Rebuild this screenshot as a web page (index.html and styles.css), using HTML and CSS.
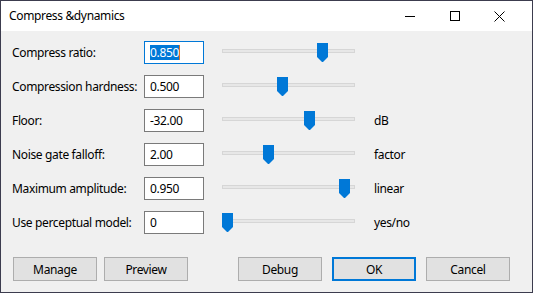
FILE: index.html
```html
<!DOCTYPE html>
<html lang="en">
<head>
<meta charset="UTF-8" />
<title>Compress &amp;dynamics</title>
<link rel="stylesheet" href="styles.css">
</head>
<body>

  <div class="window">

    <!-- Title bar -->
    <div class="titlebar">
      <span class="title">Compress &amp;dynamics</span>
      <div class="caption">
        <span class="cap-btn">
          <svg width="10" height="10" viewBox="0 0 10 10"><path d="M0 5.5H10" stroke="#000" stroke-width="1"/></svg>
        </span>
        <span class="cap-btn">
          <svg width="10" height="10" viewBox="0 0 10 10"><rect x="0.5" y="0.5" width="9" height="9" fill="none" stroke="#000" stroke-width="1"/></svg>
        </span>
        <span class="cap-btn">
          <svg width="11" height="11" viewBox="0 0 11 11"><path d="M0.5 0.5L10.5 10.5M10.5 0.5L0.5 10.5" stroke="#000" stroke-width="1"/></svg>
        </span>
      </div>
    </div>

    <!-- Body -->
    <div class="content">
      <div class="params">

        <div class="row">
          <span class="label">Compress ratio:</span>
          <div class="field focused"><span class="sel">0.850</span></div>
          <div class="slider"><div class="track"></div><svg class="thumb" style="left:95px" width="11" height="19" viewBox="0 0 11 19"><path d="M0 0H11V14L6 19H5L0 14Z" fill="#0078d7"/></svg></div>
          <span class="unit"></span>
        </div>

        <div class="row">
          <span class="label">Compression hardness:</span>
          <div class="field">0.500</div>
          <div class="slider"><div class="track"></div><svg class="thumb" style="left:55px" width="11" height="19" viewBox="0 0 11 19"><path d="M0 0H11V14L6 19H5L0 14Z" fill="#0078d7"/></svg></div>
          <span class="unit"></span>
        </div>

        <div class="row">
          <span class="label">Floor:</span>
          <div class="field">-32.00</div>
          <div class="slider"><div class="track"></div><svg class="thumb" style="left:82px" width="11" height="19" viewBox="0 0 11 19"><path d="M0 0H11V14L6 19H5L0 14Z" fill="#0078d7"/></svg></div>
          <span class="unit">dB</span>
        </div>

        <div class="row">
          <span class="label">Noise gate falloff:</span>
          <div class="field">2.00</div>
          <div class="slider"><div class="track"></div><svg class="thumb" style="left:41px" width="11" height="19" viewBox="0 0 11 19"><path d="M0 0H11V14L6 19H5L0 14Z" fill="#0078d7"/></svg></div>
          <span class="unit">factor</span>
        </div>

        <div class="row">
          <span class="label">Maximum amplitude:</span>
          <div class="field">0.950</div>
          <div class="slider"><div class="track"></div><svg class="thumb" style="left:117px" width="11" height="19" viewBox="0 0 11 19"><path d="M0 0H11V14L6 19H5L0 14Z" fill="#0078d7"/></svg></div>
          <span class="unit">linear</span>
        </div>

        <div class="row">
          <span class="label">Use perceptual model:</span>
          <div class="field">0</div>
          <div class="slider"><div class="track"></div><svg class="thumb" style="left:0px" width="11" height="19" viewBox="0 0 11 19"><path d="M0 0H11V14L6 19H5L0 14Z" fill="#0078d7"/></svg></div>
          <span class="unit">yes/no</span>
        </div>

      </div>

      <div class="buttons">
        <div class="group">
          <button class="btn">Manage</button>
          <button class="btn">Preview</button>
        </div>
        <div class="group wide">
          <button class="btn">Debug</button>
          <button class="btn default">OK</button>
          <button class="btn">Cancel</button>
        </div>
      </div>
    </div>

  </div>

</body>
</html>
```

FILE: styles.css
```css
* {
  box-sizing: border-box;
}

html, body {
  margin: 0;
  padding: 0;
  background: #f0f0f0;
  font-family: "Noto Sans", "Open Sans", sans-serif;
  font-size: 12px;
  letter-spacing: -0.35px;
  color: #000;
}

.window {
  width: 533px;
  height: 293px;
  border: 1px solid #3c3c4e;
  background: #f0f0f0;
  display: flex;
  flex-direction: column;
}

/* Title bar */
.titlebar {
  height: 30px;
  background: #fff;
  display: flex;
  align-items: center;
  justify-content: space-between;
  padding-left: 8px;
}

.title {
  font-size: 12px;
  line-height: 16px;
}

.caption {
  display: flex;
  height: 100%;
  margin-right: 10px;
}

.cap-btn {
  width: 45px;
  height: 100%;
  display: flex;
  align-items: center;
  justify-content: center;
}

/* Body */
.content {
  flex: 1;
  padding: 10px 0 0 11px;
  display: flex;
  flex-direction: column;
}

.params {
  display: flex;
  flex-direction: column;
  gap: 11px;
}

.row {
  display: flex;
  align-items: center;
  height: 23px;
}

.label {
  width: 132px;
  flex-shrink: 0;
  white-space: nowrap;
  line-height: 16px;
}

.field {
  width: 60px;
  height: 23px;
  flex-shrink: 0;
  background: #fff;
  border: 1px solid #7a7a7a;
  padding: 0 0 0 5px;
  line-height: 21px;
  white-space: nowrap;
}

.field.focused {
  border-color: #0078d7;
}

.sel {
  background: #0078d7;
  color: #fff;
  display: inline-block;
  line-height: 15px;
  border-right: 1px solid #e07020;
}

.slider {
  position: relative;
  width: 133px;
  height: 23px;
  flex-shrink: 0;
  margin-left: 18px;
}

.track {
  position: absolute;
  left: 0;
  right: 0;
  top: 8px;
  height: 4px;
  background: #e7e7e7;
  border: 1px solid #d6d6d6;
}

.thumb {
  position: absolute;
  top: 2px;
}

.unit {
  margin-left: 19px;
  line-height: 16px;
}

/* Buttons */
.buttons {
  display: flex;
  margin-top: 23px;
  padding-left: 1px;
}

.group {
  display: flex;
  gap: 7px;
}

.group.wide {
  gap: 10px;
  margin-left: 50px;
}

.btn {
  width: 84px;
  height: 24px;
  background: #e1e1e1;
  border: 1px solid #adadad;
  font-family: inherit;
  font-size: 12px;
  letter-spacing: inherit;
  color: #000;
  padding: 0;
  margin: 0;
}

.btn.default {
  border: 2px solid #0078d7;
}
```
